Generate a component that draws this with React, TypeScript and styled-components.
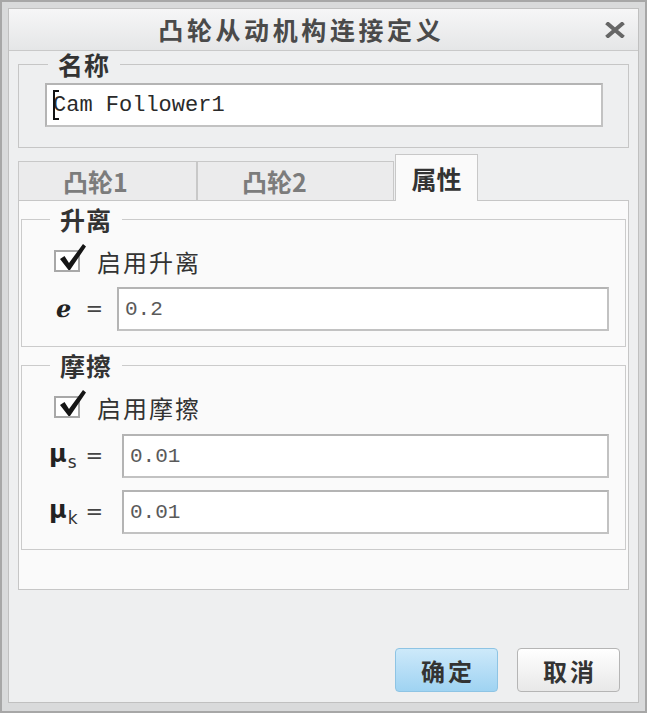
import React from 'react';
import styled, { createGlobalStyle } from 'styled-components';

const GlobalStyle = createGlobalStyle`
  html, body {
    margin: 0;
    padding: 0;
    background: #d8d9da;
  }
  body {
    font-family: "Noto Sans CJK SC", "Noto Sans", sans-serif;
  }
`;

const Window = styled.div`
  width: 647px;
  height: 713px;
  box-sizing: border-box;
  border: 2px solid #a7a7a7;
  background: #d9dadb;
  padding: 6px 6px 8px;
  display: flex;
`;

const Dialog = styled.div`
  flex: 1;
  display: flex;
  flex-direction: column;
  background: #eeeff0;
  border: 1px solid #c0c0c0;
`;

const TitleBar = styled.div`
  height: 41px;
  display: grid;
  grid-template-columns: 1fr 48px;
  align-items: center;
  background: linear-gradient(#f6f6f7, #e5e6e7);
  border-bottom: 1px solid #c9c9c9;
`;

const Title = styled.div`
  text-align: center;
  font-size: 25px;
  font-weight: 700;
  letter-spacing: 3.6px;
  padding-left: 3.6px;
  color: #4a4a4a;
  line-height: 41px;
`;

const Close = styled.div`
  display: flex;
  align-items: center;
  padding-left: 15px;
`;

const Body = styled.div`
  flex: 1;
  display: flex;
  flex-direction: column;
  padding: 0 9px;
`;

const NameGroup = styled.fieldset`
  margin: 0;
  min-width: 0;
  padding: 6px 25px 20px 26px;
  border: 1px solid #c6c6c6;
`;

const Legend = styled.legend<{ $shift: number }>`
  padding: 0 10px;
  margin-left: ${(p) => p.$shift}px;
  font-size: 25px;
  font-weight: 700;
  line-height: 26px;
  letter-spacing: 1px;
  color: #333;
`;

const TextBox = styled.div<{ $mono?: boolean }>`
  height: 44px;
  box-sizing: border-box;
  border: 2px solid #c2c2c2;
  border-top-color: #b4b4b4;
  border-left-color: #b4b4b4;
  background: #fff;
  display: flex;
  align-items: center;
  padding: 0 6px;
  font-family: "Liberation Mono", "DejaVu Sans Mono", monospace;
  font-size: ${(p) => (p.$mono ? 22 : 21)}px;
  color: ${(p) => (p.$mono ? '#2a2a2a' : '#5a5a5a')};
  white-space: pre;
`;

const Caret = styled.span`
  display: inline-block;
  position: relative;
  width: 2px;
  height: 30px;
  background: #111;
  margin-right: -2px;
  &::before,
  &::after {
    content: '';
    position: absolute;
    left: 0;
    width: 6px;
    height: 2px;
    background: #111;
  }
  &::before {
    top: 0;
  }
  &::after {
    bottom: 0;
  }
`;

const TabBar = styled.div`
  margin-top: 6px;
  height: 46px;
  display: flex;
  align-items: flex-end;
`;

const Tab = styled.div<{ $w: number; $active?: boolean }>`
  width: ${(p) => p.$w}px;
  height: ${(p) => (p.$active ? 47 : 39)}px;
  box-sizing: border-box;
  border: 1px solid #c8c8c8;
  border-bottom: none;
  display: flex;
  align-items: center;
  justify-content: ${(p) => (p.$active ? 'center' : 'flex-start')};
  padding-left: ${(p) => (p.$active ? 0 : 44)}px;
  font-size: 25px;
  font-weight: 700;
  color: ${(p) => (p.$active ? '#333' : '#7c7c7c')};
  background: ${(p) => (p.$active ? '#fafafa' : '#ebebec')};
  position: relative;
  z-index: ${(p) => (p.$active ? 1 : 0)};
  margin-bottom: ${(p) => (p.$active ? -1 : 0)}px;
  margin-left: ${(p) => (p.$active ? 1 : 0)}px;
  & + & {
    border-left: ${(p) => (p.$active ? '1px solid #c8c8c8' : 'none')};
  }
`;

const Panel = styled.div`
  border: 1px solid #c6c6c6;
  background: #fafafa;
  padding: 0 2px 39px;
`;

const Group = styled.fieldset`
  margin: 5px 0 0;
  min-width: 0;
  padding: 14px 16px 15px 27px;
  border: 1px solid #cbcbcb;
`;

const CheckRow = styled.div`
  height: 30px;
  display: flex;
  align-items: center;
  gap: 17px;
  margin-left: 5px;
  font-size: 24px;
  letter-spacing: 2px;
  color: #333;
`;

const CheckBox = styled.span`
  position: relative;
  width: 26px;
  height: 22px;
  box-sizing: border-box;
  border: 2px solid #a8a8a8;
  background: #fff;
  flex: none;
`;

const CheckMark = styled.svg`
  position: absolute;
  left: 2px;
  top: -8px;
  width: 28px;
  height: 27px;
  overflow: visible;
`;

const FieldRow = styled.div<{ $gap: number; $mt: number }>`
  display: grid;
  grid-template-columns: 54px 1fr;
  column-gap: ${(p) => p.$gap}px;
  align-items: center;
  margin-top: ${(p) => p.$mt}px;
`;

const FieldLabel = styled.div<{ $inset: number }>`
  display: flex;
  align-items: center;
  padding-left: ${(p) => p.$inset}px;
  color: #222;
`;

const Symbol = styled.span`
  font-family: "DejaVu Sans", "Liberation Sans", sans-serif;
  font-weight: 700;
  font-size: 24px;
  line-height: 1;
  sub {
    font-weight: 400;
    font-size: 17px;
    vertical-align: -6px;
    margin-left: 1px;
    color: #333;
  }
`;

const Equals = styled.span`
  margin-left: auto;
  font-family: "DejaVu Sans", sans-serif;
  font-size: 21px;
  color: #444;
`;

const Footer = styled.div`
  margin-top: auto;
  display: flex;
  justify-content: flex-end;
  gap: 19px;
  padding: 0 9px 10px 0;
`;

const Button = styled.div<{ $primary?: boolean }>`
  width: 103px;
  height: 44px;
  box-sizing: border-box;
  border-radius: 4px;
  border: 1px solid ${(p) => (p.$primary ? '#8ec4e4' : '#b5b5b5')};
  background: ${(p) =>
    p.$primary
      ? 'linear-gradient(#cde9fa, #9fd3f2)'
      : 'linear-gradient(#ffffff, #e8e8e8)'};
  display: flex;
  align-items: center;
  justify-content: center;
  font-size: 24px;
  font-weight: 700;
  letter-spacing: 3px;
  padding-left: 3px;
  color: #333;
`;

function Check({ label }: { label: string }) {
  return (
    <CheckRow>
      <CheckBox>
        <CheckMark viewBox="0 0 28 27">
          <path d="M2 15 L6.5 12 L11 19 L25 0 L28 2.5 L12 26 L10.5 26 Z" fill="#151515" />
        </CheckMark>
      </CheckBox>
      {label}
    </CheckRow>
  );
}

export default function App() {
  return (
    <>
      <GlobalStyle />
      <Window>
        <Dialog>
          <TitleBar>
            <Title>凸轮从动机构连接定义</Title>
            <Close>
              <svg width="20" height="16" viewBox="0 0 20 16">
                <path d="M3 2 L17 14 M17 2 L3 14" stroke="#666" strokeWidth="4" strokeLinecap="square" />
              </svg>
            </Close>
          </TitleBar>
          <Body>
            <NameGroup>
              <Legend $shift={3}>名称</Legend>
              <TextBox $mono>
                <Caret />
                Cam Follower1
              </TextBox>
            </NameGroup>

            <TabBar>
              <Tab $w={179}>凸轮1</Tab>
              <Tab $w={197}>凸轮2</Tab>
              <Tab $w={83} $active>属性</Tab>
            </TabBar>

            <Panel>
              <Group>
                <Legend $shift={1}>升离</Legend>
                <Check label="启用升离" />
                <FieldRow $gap={14} $mt={11}>
                  <FieldLabel $inset={7}>
                    <Symbol>ℯ</Symbol>
                    <Equals>=</Equals>
                  </FieldLabel>
                  <TextBox>0.2</TextBox>
                </FieldRow>
              </Group>
              <Group>
                <Legend $shift={1}>摩擦</Legend>
                <Check label="启用摩擦" />
                <FieldRow $gap={19} $mt={12}>
                  <FieldLabel $inset={0}>
                    <Symbol>
                      μ<sub>s</sub>
                    </Symbol>
                    <Equals>=</Equals>
                  </FieldLabel>
                  <TextBox>0.01</TextBox>
                </FieldRow>
                <FieldRow $gap={19} $mt={12}>
                  <FieldLabel $inset={0}>
                    <Symbol>
                      μ<sub>k</sub>
                    </Symbol>
                    <Equals>=</Equals>
                  </FieldLabel>
                  <TextBox>0.01</TextBox>
                </FieldRow>
              </Group>
            </Panel>

            <Footer>
              <Button $primary>确定</Button>
              <Button>取消</Button>
            </Footer>
          </Body>
        </Dialog>
      </Window>
    </>
  );
}
